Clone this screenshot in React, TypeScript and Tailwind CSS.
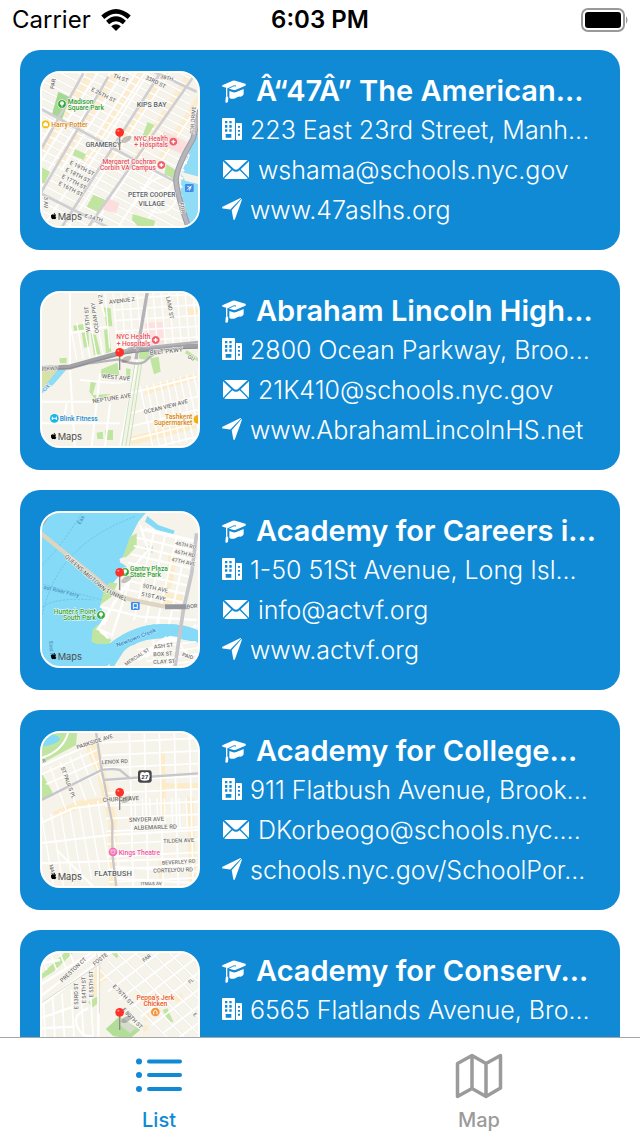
import type { ReactNode } from 'react';
import { FaApple } from 'react-icons/fa';

type Row = { kind: 'school' | 'building' | 'mail' | 'link'; text: string };
type School = { rows: Row[]; map: ReactNode; place: string };

/* A family of parallel strokes: n lines of vector (dx, dy), each shifted by (sx, sy). */
function hatch(x: number, y: number, sx: number, sy: number, dx: number, dy: number, n: number) {
  return Array.from({ length: n }, (_, i) => `M${x + sx * i} ${y + sy * i}l${dx} ${dy}`).join('');
}

function Label({ x, y, children, size = 17, rot = 0, fill = '#737373', anchor = 'start', weight = 500, halo = '#fffdf8' }: {
  x: number; y: number; children: string; size?: number; rot?: number; fill?: string;
  anchor?: 'start' | 'middle' | 'end'; weight?: number; halo?: string;
}) {
  return (
    <text x={x} y={y} fontSize={size} fontWeight={weight} fill={fill} textAnchor={anchor}
      stroke={halo} strokeWidth="3" paintOrder="stroke" transform={`rotate(${rot} ${x} ${y})`}>
      {children}
    </text>
  );
}

function Pin() {
  return (
    <g>
      <ellipse cx="289" cy="238" rx="17" ry="8" fill="#555" opacity=".35" transform="rotate(-30 289 238)" />
      <path d="M269 225V270" stroke="#8b8b8b" strokeWidth="4" />
      <circle cx="269" cy="217" r="13" fill="#ff3028" />
      <circle cx="265" cy="212" r="3" fill="#ff9d96" />
    </g>
  );
}

function Cross({ x, y }: { x: number; y: number }) {
  return (
    <g>
      <circle cx={x} cy={y} r="13" fill="#ef5f6c" stroke="#fff" strokeWidth="2" />
      <path d={`M${x - 6} ${y}h12M${x} ${y - 6}v12`} stroke="#fff" strokeWidth="4" />
    </g>
  );
}

function Tree({ x, y }: { x: number; y: number }) {
  return (
    <g>
      <circle cx={x} cy={y} r="13" fill="#35a935" stroke="#fff" strokeWidth="2" />
      <circle cx={x} cy={y - 2} r="6" fill="#fff" />
      <path d={`M${x} ${y}v8`} stroke="#fff" strokeWidth="3" />
    </g>
  );
}

function Thumb({ top = 33, label, children }: { top?: number; label: string; children: ReactNode }) {
  return (
    <div className="h-[157px] w-40 shrink-0 overflow-hidden rounded-[20px] border-2 border-white bg-[#f6f3ea]">
      <svg role="img" aria-label={label} viewBox={`36 ${top + 6} 468 459`} className="block h-full w-full font-['Roboto',sans-serif]" fill="none">
        {children}
        <g fill="#4c4c4c">
          <FaApple x={60} y={top + 424} size={22} />
          <text x="83" y={top + 446} fontSize="28" fontFamily="Inter, sans-serif">Maps</text>
        </g>
      </svg>
    </div>
  );
}

const mapGramercy = (
  <Thumb label="Map of Gramercy">
    <path d={hatch(10, 310, 75, 0, 230, -360, 7)} stroke="#fdedcf" strokeWidth="22" />
    <path d="M330 520L420 360L500 300V520Z" fill="#f6f3ea" />
    <path d="M497 220L455 340L452 400L478 510H510V220Z" fill="#8fdcf6" />
    <path d="M452 335L505 350V372L465 362Z" fill="#f6f3ea" />
    <path d={hatch(20, -180, 0, 26, 460, 235, 28)} stroke="#e9e6df" strokeWidth="7" />
    <path d={hatch(20, -180, 0, 26, 460, 235, 28)} stroke="#fff" strokeWidth="5" />
    <path d={hatch(-20, 330, 38, 0, 210, -330, 6)} stroke="#fff" strokeWidth="5" />
    <path d={hatch(20, 530, 75, 0, 330, -500, 5)} stroke="#fff" strokeWidth="5" />
    <path d="M497 235L462 335L455 400L478 510H510V220Z" fill="#8fdcf6" />
    <path d="M452 335L505 350V372L465 362Z" fill="#f6f3ea" />
    <path d="M85 95L120 112L96 178L66 163Z" fill="#a5d893" />
    <path d="M353 186L373 195L350 232L338 226ZM135 267L168 283L160 300L128 285ZM190 404L227 420L208 458L170 440ZM408 312L437 330L430 362L403 345ZM308 462L375 482L372 500H325L306 480ZM30 318L60 335L44 370L30 368Z" fill="#bfe5a0" />
    <path d="M400 212L470 245L460 285L395 255Z M230 412L268 430L258 460L220 450Z" fill="#fbdedd" />
    <path d="M310 440Q350 360 395 350T440 420Q410 475 360 450M330 380Q370 410 420 380" stroke="#fff" strokeWidth="5" />
    <path d="M20 420L235 50M90 510L390 40M165 515L490 50M30 145L440 368M32 400L250 510M360 30L500 95M35 265L160 40" stroke="#cfcfd3" strokeWidth="8" />
    <path d="M510 150L490 235Q440 320 438 360Q440 400 478 510" stroke="#9c9ca4" strokeWidth="17" />
    <path d="M510 150L490 235Q440 320 438 360Q440 400 478 510" stroke="#b6b6bc" strokeWidth="11" />
    <Label x={182} y={92} rot={27} size={17}>E 26TH ST</Label>
    <Label x={345} y={56} rot={27} size={17}>33RD ST</Label>
    <Label x={248} y={52} rot={20} size={17}>TH ST</Label>
    <Label x={390} y={54} rot={14} size={16}>38TH</Label>
    <Label x={72} y={88} rot={-80} size={17}>PAR</Label>
    <Label x={118} y={312} rot={27} size={17}>E 19TH ST</Label>
    <Label x={105} y={333} rot={27} size={17}>E 18TH ST</Label>
    <Label x={94} y={353} rot={27} size={17}>E 17TH ST</Label>
    <Label x={84} y={374} rot={27} size={17}>E 16TH ST</Label>
    <Label x={163} y={472} rot={16} size={17}>E 14TH</Label>
    <Label x={41} y={410} rot={90} size={17}>3 AV</Label>
    <Label x={492} y={222} rot={-86} size={17}>FDR DRIVE</Label>
    <Label x={448} y={430} rot={78} size={17}>FDR</Label>
    <Label x={320} y={140} size={21} fill="#55606b">KIPS BAY</Label>
    <Label x={167} y={261} size={20} fill="#55606b">GRAMERCY</Label>
    <Label x={365} y={412} size={20} anchor="middle" fill="#55606b">PETER COOPER</Label>
    <Label x={365} y={437} size={20} anchor="middle" fill="#55606b">VILLAGE</Label>
    <Label x={113} y={131} size={20} fill="#2f9e35">Madison</Label>
    <Label x={113} y={150} size={20} fill="#2f9e35">Square Park</Label>
    <Label x={64} y={200} size={20} fill="#d98512">Harry Potter</Label>
    <Label x={414} y={242} size={20} anchor="end" fill="#e8505f">NYC Health</Label>
    <Label x={414} y={261} size={20} anchor="end" fill="#e8505f">+ Hospitals</Label>
    <Label x={378} y={312} size={20} anchor="end" fill="#e8505f">Margaret Cochran</Label>
    <Label x={378} y={331} size={20} anchor="end" fill="#e8505f">Corbin VA Campus</Label>
    <Tree x={96} y={132} />
    <circle cx="47" cy="193" r="13" fill="#f8b90c" stroke="#fff" strokeWidth="2" />
    <path d="M40 190h14v9h-14zM44 190v-4h6v4" fill="#fff" />
    <Cross x={430} y={245} />
    <Cross x={394} y={315} />
    <rect x="465" y="372" width="26" height="24" rx="4" fill="#3b8bea" />
    <path d="M471 391L485 377M472 379L484 384M478 392L482 380" stroke="#fff" strokeWidth="3" />
    <Pin />
  </Thumb>
);

const mapConey = (
  <Thumb label="Map of Coney Island">
    <path d="M30 272L108 266L30 335Z" fill="#d8e2a8" />
    <path d="M30 335L85 268H110L72 312L30 345Z" fill="#8fdcf6" />
    <path d="M130 137L172 130V148L132 153ZM155 158L175 155L178 200L162 203ZM182 160L198 165L212 222L192 226ZM220 82L242 85L247 138L230 140ZM222 150L236 146L244 215L228 220ZM88 235L110 233V250H90ZM214 268L262 248L268 285L212 290ZM288 265L302 267L300 290L289 292ZM182 305L198 308L188 345L240 342L242 358H195L178 335ZM360 235L386 230L392 275L372 283ZM330 210L370 205L350 240L320 235ZM200 458L218 455L220 477H202ZM225 450H249V480H225ZM470 210L505 235V245L465 220Z" fill="#bfe5a0" />
    <path d="M345 130L400 125L405 190L342 198Z" fill="#fce1df" />
    <path d="M340 325L500 280V298L345 345ZM300 470L500 420V445L305 495ZM470 85H505V105H475ZM230 345L300 340V355L235 358Z" fill="#fdecc9" />
    <path d={hatch(245, 58, 4, 32, 290, -18, 5)} stroke="#fff" strokeWidth="5" />
    <path d={hatch(225, 35, 24, 0, 14, 170, 12)} stroke="#fff" strokeWidth="4" />
    <path d={hatch(300, 400, 0, 40, 220, -55, 4)} stroke="#fff" strokeWidth="5" />
    <path d={hatch(330, 320, 20, -5, 40, 190, 9)} stroke="#fff" strokeWidth="4" />
    <path d={hatch(120, 130, 20, -3, 20, 110, 5)} stroke="#fff" strokeWidth="4" />
    <path d="M120 35V265M30 365H190L320 335L500 290M120 270L135 510M210 280L185 500M270 500L325 220L350 40M110 370L100 430M30 430H270M150 300L260 310L310 300M240 370L225 500M118 160L230 140M205 40L225 110" stroke="#fff" strokeWidth="6" />
    <path d="M275 500L315 250M287 500L326 250M298 500L335 250" stroke="#c5e3b6" strokeWidth="3" />
    <path d="M30 266L120 261L250 225Q300 205 505 198" stroke="#a1a1a6" strokeWidth="15" />
    <path d="M180 250L265 238Q330 262 350 240T400 210M270 225Q300 195 345 202L505 186" stroke="#b4b4b8" strokeWidth="7" />
    <path d="M352 35L318 238" stroke="#b4b4b8" strokeWidth="10" />
    <path d="M30 270L120 265L250 229Q300 212 505 204" stroke="#8c8c92" strokeWidth="3" />
    <Label x={238} y={72} rot={-7} size={17}>AVENUE Z</Label>
    <Label x={180} y={155} rot={-94} size={17}>W 5TH ST</Label>
    <Label x={207} y={158} rot={-98} size={17}>OCEAN PKY</Label>
    <Label x={218} y={72} rot={-94} size={17}>W 2</Label>
    <Label x={408} y={50} rot={80} size={17}>LAND ST</Label>
    <Label x={40} y={272} rot={-4} size={16}>PKWY</Label>
    <Label x={360} y={225} rot={-6} size={19}>BELT PKWY</Label>
    <Label x={215} y={294} rot={6} size={18}>WEST AVE</Label>
    <Label x={188} y={370} rot={-9} size={18}>NEPTUNE AVE</Label>
    <Label x={343} y={402} rot={-14} size={17}>OCEAN VIEW AVE</Label>
    <Label x={44} y={336} rot={-48} size={16} fill="#3c91c9">Crk</Label>
    <Label x={472} y={234} rot={25} size={16}>GU</Label>
    <Label x={361} y={177} size={20} anchor="end" fill="#e8505f">NYC Health</Label>
    <Label x={361} y={197} size={20} anchor="end" fill="#e8505f">+ Hospitals</Label>
    <Label x={89} y={422} size={20} fill="#168bd0">Blink Fitness</Label>
    <Label x={487} y={416} size={20} anchor="end" fill="#d98512">Tashkent</Label>
    <Label x={487} y={435} size={20} anchor="end" fill="#d98512">Supermarket</Label>
    <Cross x={377} y={180} />
    <circle cx="73" cy="415" r="13" fill="#16b6e8" />
    <path d="M65 415h16M67 410v10M79 410v10" stroke="#fff" strokeWidth="3" />
    <circle cx="504" cy="418" r="13" fill="#f4ae13" />
    <Pin />
  </Thumb>
);

const mapQueens = (
  <Thumb label="Map of Long Island City">
    <path d="M30 30H355L325 65L300 115L280 170L270 185L290 200L240 260L212 315L222 350L196 400L240 430L200 510H30Z" fill="#85daf7" />
    <path d="M300 110L320 100V140L295 165L275 185ZM238 248L262 250L245 290L210 315L222 270ZM188 388L205 372L210 400L245 420L235 432H200L184 425Z" fill="#bfe5a0" />
    <path d="M268 178Q275 170 290 172L300 190H272Z" fill="#f6f3ea" />
    <path d="M235 510L250 450Q320 400 380 385T510 395V430Q420 405 350 420T255 510Z" fill="#85daf7" />
    <path d="M245 510L290 440L420 410L505 430V510Z" fill="#f6f3ea" />
    <path d="M240 430Q310 375 390 372T510 395V428Q430 400 370 408T225 505L180 510Z" fill="#85daf7" />
    <path d="M352 48L385 75L434 92L430 103L380 90L345 65Z" fill="#85daf7" />
    <path d="M30 90L65 40H45L30 60Z" fill="#a8a8ad" />
    <path d="M415 160L440 165L430 240L415 280L460 285L455 305L395 315L412 230Z" fill="#fdecc9" />
    <rect x="345" y="138" width="24" height="20" fill="#d8e0d3" />
    <path d="M155 40Q80 160 30 200M315 50Q120 120 60 270T60 500M30 250L215 300M30 330Q60 290 190 300" stroke="#5fb9e4" strokeWidth="2" strokeDasharray="7 4" />
    <path d={hatch(330, 88, -9, 25, 190, 44, 9)} stroke="#fff" strokeWidth="6" />
    <path d={hatch(372, 95, 34, 8, -60, 265, 4)} stroke="#fff" strokeWidth="6" />
    <path d="M330 75L355 150L320 190L285 260L205 385L235 415M345 85L505 125M300 240L245 410M255 300L220 375M210 320L330 350L500 360M200 385L245 405M385 350V390" stroke="#fff" strokeWidth="7" />
    <path d={hatch(280, 500, 22, -9, 130, -90, 6)} stroke="#fff" strokeWidth="5" />
    <path d={hatch(320, 450, 15, 17, 180, -25, 4)} stroke="#fff" strokeWidth="5" />
    <path d="M370 420L375 500M400 415L420 500M445 430L505 500" stroke="#fff" strokeWidth="6" />
    <path d="M240 430Q310 375 390 372T510 395V428Q430 400 370 408T265 470L180 510Z" fill="#85daf7" />
    <path d="M500 100L485 220L460 330L435 500" stroke="#c6c6cb" strokeWidth="11" />
    <path d="M30 98L100 155L205 240Q260 295 330 305L405 320" stroke="#ddd4c2" strokeWidth="13" />
    <path d="M405 320H475" stroke="#96969d" strokeWidth="15" />
    <Label x={103} y={172} rot={41} size={18}>QUEENS MIDTOWN</Label>
    <Label x={226} y={277} rot={24} size={18}>TUNNEL</Label>
    <Label x={435} y={134} rot={12} size={16}>46TH RD</Label>
    <Label x={432} y={159} rot={12} size={16}>46TH RD</Label>
    <Label x={424} y={183} rot={12} size={16}>47TH AVE</Label>
    <Label x={337} y={262} rot={12} size={17}>50TH AVE</Label>
    <Label x={333} y={287} rot={12} size={17}>51ST AVE</Label>
    <Label x={470} y={326} rot={-5} size={17}>BOR</Label>
    <Label x={372} y={446} rot={-6} size={17}>ASH ST</Label>
    <Label x={370} y={469} rot={-3} size={17}>BOX ST</Label>
    <Label x={370} y={492} rot={-3} size={17}>CLAY ST</Label>
    <Label x={288} y={498} rot={-33} size={15}>MERCIAL ST</Label>
    <Label x={455} y={468} rot={18} size={16}>PAID</Label>
    <Label x={40} y={266} rot={14} size={17} fill="#3f94c5" halo="#8fdcf6">ast River Ferry</Label>
    <Label x={150} y={74} rot={-58} size={17} fill="#3f94c5" halo="#8fdcf6">Eas</Label>
    <Label x={57} y={424} rot={85} size={16} fill="#3f94c5" halo="#8fdcf6">East R</Label>
    <Label x={262} y={442} rot={-22} size={18} fill="#3186c4" halo="#b5e8fa">Newtown Creek</Label>
    <Label x={300} y={214} size={20} fill="#2f9e35">Gantry Plaza</Label>
    <Label x={300} y={232} size={20} fill="#2f9e35">State Park</Label>
    <Label x={197} y={342} size={20} anchor="end" fill="#2f9e35">Hunter's Point</Label>
    <Label x={197} y={361} size={20} anchor="end" fill="#2f9e35">South Park</Label>
    <Tree x={285} y={216} />
    <Tree x={213} y={345} />
    <rect x="303" y="306" width="26" height="24" rx="4" fill="#3b8bea" />
    <path d="M310 311h12v12h-12zM309 327l4-4M323 327l-4-4" stroke="#fff" strokeWidth="3" />
    <Pin />
  </Thumb>
);

const mapFlatbush = (
  <Thumb label="Map of Flatbush">
    <path d="M30 30H142L138 75L30 133ZM30 150L72 225L30 243Z" fill="#bfe5a0" />
    <path d="M42 55Q60 35 82 48T60 75T42 55Z" fill="#85daf7" />
    <path d="M30 115Q100 95 115 35" stroke="#fff" strokeWidth="6" />
    <path d="M175 60L205 65L232 180L260 300L262 500H238L235 310L200 160L170 95ZM70 275L150 240L320 225V245L160 262L75 295ZM390 90L405 95L408 300L392 310ZM385 190H505V205H390ZM470 230L490 235L500 500H480ZM385 430L400 420L402 500H388Z" fill="#fdecc9" />
    <path d={hatch(215, 68, 2, 38, 300, -14, 12)} stroke="#fff" strokeWidth="5" />
    <path d={hatch(298, 38, 45, 0, 12, 470, 5)} stroke="#fff" strokeWidth="5" />
    <path d={hatch(315, 235, 22, 0, 3, 90, 8)} stroke="#fff" strokeWidth="4" />
    <path d={hatch(30, 165, 18, 28, 170, -75, 3)} stroke="#fff" strokeWidth="5" />
    <path d={hatch(35, 290, 28, -8, 38, 220, 8)} stroke="#fff" strokeWidth="4" />
    <path d={hatch(60, 140, 30, -14, 48, 130, 5)} stroke="#fff" strokeWidth="4" />
    <path d="M30 140L200 65L240 40M30 370L240 345L505 330M30 310L130 265L320 240M35 430L500 415M250 440L505 455M250 475L505 490M80 390L190 500" stroke="#fff" strokeWidth="6" />
    <path d="M30 242L215 150M198 35L215 150L247 310V400L260 510M213 150Q250 145 270 150L300 175M220 180L505 160" stroke="#c6c6cc" strokeWidth="7" />
    <Label x={142} y={88} rot={-18} size={17}>PARKSIDE AVE</Label>
    <Label x={215} y={133} rot={-3} size={17}>LENOX RD</Label>
    <Label x={92} y={143} rot={70} size={17}>ST PAULS PL</Label>
    <Label x={40} y={129} rot={-18} size={16}>R</Label>
    <Label x={218} y={246} rot={-3} size={18}>CHURCH AVE</Label>
    <Label x={297} y={306} rot={-2} size={18}>SNYDER AVE</Label>
    <Label x={311} y={330} rot={-2} size={18}>ALBEMARLE RD</Label>
    <Label x={400} y={369} rot={-2} size={17}>TILDEN AVE</Label>
    <Label x={396} y={434} rot={-3} size={16}>BEVERLEY RD</Label>
    <Label x={370} y={458} rot={-2} size={17}>CORTELYOU RD</Label>
    <Label x={332} y={496} rot={-1} size={14}>ITMAS AV</Label>
    <Label x={58} y={434} rot={80} size={16}>MAR</Label>
    <Label x={193} y={469} size={23} fill="#55606b">FLATBUSH</Label>
    <Label x={266} y={404} size={20} fill="#ef56a9">Kings Theatre</Label>
    <circle cx="249" cy="396" r="13" fill="#f56db5" />
    <path d="M243 390h12v8q-6 8-12 0zM246 394h2M251 394h2" stroke="#fff" strokeWidth="2" />
    <rect x="324" y="151" width="41" height="37" rx="7" fill="#45454a" />
    <path d="M332 158q6-4 12 0q6-4 13 0q5 10 0 22q-13 5-25 0q-5-12 0-22z" fill="#fff" />
    <text x="344" y="176" fontSize="18" fontWeight="700" fill="#333" textAnchor="middle">27</text>
    <Pin />
  </Thumb>
);

const mapFlatlands = (
  <Thumb label="Map of Flatlands">
    <g transform="translate(0 -30)">
      <path d="M30 150L70 125L138 60H112L30 138ZM175 215L208 195L210 215L185 235ZM228 297L268 260L330 300L300 325L250 318ZM245 70H272L260 85ZM398 240L412 235L430 275L418 280Z" fill="#bfe5a0" />
      <path d="M195 110L210 105L230 150L215 155L205 200H185ZM340 265L355 245L362 262L345 275ZM430 205L455 190L460 205L440 220ZM335 290L350 285L355 300L342 305Z" fill="#fdecc9" />
      <path d={hatch(204, 114, 30, -22, 270, 270, 11)} stroke="#e6e3dc" strokeWidth="7" />
      <path d={hatch(204, 114, 30, -22, 270, 270, 11)} stroke="#fff" strokeWidth="5" />
      <path d={hatch(200, 160, 33, 25, 270, -205, 9)} stroke="#fff" strokeWidth="5" />
      <path d={hatch(40, 215, 28, -12, 10, 180, 6)} stroke="#fff" strokeWidth="5" />
      <path d={hatch(30, 70, 30, 0, 20, 50, 4)} stroke="#fff" strokeWidth="5" />
      <path d="M30 230L250 60M30 200L200 70M30 165L190 65M205 70V330M30 265L130 230M30 295L135 290M175 235Q130 250 140 285T190 320M30 100L90 90" stroke="#fff" strokeWidth="7" />
      <path d="M25 225L215 98M200 70L208 110V250" stroke="#dedbd5" strokeWidth="3" />
      <path d="M228 297L268 260L330 300L300 325L250 318Z" fill="#b3de97" />
      <path d="M275 262L318 295L300 310L270 285Z" fill="#d5dccb" />
      <Label x={97} y={158} rot={-43} size={17}>PRESTON CT</Label>
      <Label x={194} y={108} rot={-38} size={17}>FOSTE</Label>
      <Label x={145} y={238} rot={-91} size={17}>E 53RD ST</Label>
      <Label x={168} y={220} rot={-91} size={17}>E 54TH ST</Label>
      <Label x={190} y={202} rot={-91} size={17}>E 55TH ST</Label>
      <Label x={247} y={170} rot={46} size={17}>E 76TH ST</Label>
      <Label x={275} y={240} rot={46} size={17}>E 80TH ST</Label>
      <Label x={342} y={97} rot={-38} size={16}>FAR</Label>
      <Label x={480} y={162} rot={-42} size={15}>FL</Label>
      <Label x={488} y={254} rot={45} size={15}>E</Label>
      <Label x={376} y={210} size={20} anchor="middle" fill="#e95822">Peppa's Jerk</Label>
      <Label x={376} y={229} size={20} anchor="middle" fill="#e95822">Chicken</Label>
      <circle cx="376" cy="246" r="13" fill="#f5943a" />
      <path d="M371 253v-9q5-7 10 0v9" stroke="#fff" strokeWidth="3" />
      <g transform="translate(0 30)"><Pin /></g>
    </g>
  </Thumb>
);

function Cap() {
  return (
    <svg viewBox="36 61 72 69" className="h-[23px] w-6 shrink-0" fill="#fff" aria-hidden="true">
      <path d="M37 77L68 63Q72 62 76 63L106 72Q109 75 106 78L78 90Q73 92 68 90L38 81Q35 79 37 77Z" />
      <path d="M78 79Q72 77 68 80L54 87V98" fill="none" stroke="#118ad5" strokeWidth="3" />
      <path d="M50 84V108" stroke="#fff" strokeWidth="4" />
      <path d="M50 105L55 115L54 127Q50 131 46 128L47 114Z" />
      <path d="M58 94L69 98Q74 99 79 97L101 88V104Q99 109 92 111Q84 110 76 116Q64 120 58 114Z" />
    </svg>
  );
}

function Building() {
  return (
    <svg viewBox="36 174 60 66" className="mb-0.5 h-[22px] w-5 shrink-0" aria-hidden="true">
      <path fill="#fff" fillRule="evenodd" d="M39 174H72Q75 174 75 177V240H39Q36 240 36 237V177Q36 174 39 174ZM45 183V190H52V183ZM58 183V190H65V183ZM45 195V203H52V195ZM58 195V203H65V195ZM45 208V215H52V208ZM58 208V215H65V208ZM47 222V233H64V222ZM78 189H93Q96 189 96 192V237Q96 240 93 240H78ZM84 198V203H90V198ZM84 210V215H90V210ZM84 221V227H90V221Z" />
    </svg>
  );
}

function Envelope() {
  return (
    <svg viewBox="36 300 84 57" className="mb-0.5 h-[19px] w-7 shrink-0" fill="#fff" aria-hidden="true">
      <path d="M43 300H113L84 327Q78 332 72 327ZM39 304L64 328L39 353ZM117 304V353L92 328ZM67 331Q78 340 89 331L113 355Q112 357 109 357H47Q44 357 43 355Z" />
    </svg>
  );
}

function Arrow() {
  return (
    <svg viewBox="36 413 60 67" className="mb-0.5 h-[22px] w-5 shrink-0" fill="#fff" aria-hidden="true">
      <path d="M37 440L92 413Q95 413 93 415L61 448L38 445Q34 443 37 440ZM95 416Q97 416 96 419L75 478Q72 482 70 478L65 450Z" />
    </svg>
  );
}

const icons = { school: <Cap />, building: <Building />, mail: <Envelope />, link: <Arrow /> };

const schools: School[] = [
  {
    place: 'gramercy', map: mapGramercy, rows: [
      { kind: 'school', text: 'Â“47Â” The American...' },
      { kind: 'building', text: '223 East 23rd Street, Manh...' },
      { kind: 'mail', text: 'wshama@schools.nyc.gov' },
      { kind: 'link', text: 'www.47aslhs.org' },
    ],
  },
  {
    place: 'coney', map: mapConey, rows: [
      { kind: 'school', text: 'Abraham Lincoln High...' },
      { kind: 'building', text: '2800 Ocean Parkway, Broo...' },
      { kind: 'mail', text: '21K410@schools.nyc.gov' },
      { kind: 'link', text: 'www.AbrahamLincolnHS.net' },
    ],
  },
  {
    place: 'queens', map: mapQueens, rows: [
      { kind: 'school', text: 'Academy for Careers i...' },
      { kind: 'building', text: '1-50 51St Avenue, Long Isl...' },
      { kind: 'mail', text: 'info@actvf.org' },
      { kind: 'link', text: 'www.actvf.org' },
    ],
  },
  {
    place: 'flatbush', map: mapFlatbush, rows: [
      { kind: 'school', text: 'Academy for College...' },
      { kind: 'building', text: '911 Flatbush Avenue, Brook...' },
      { kind: 'mail', text: 'DKorbeogo@schools.nyc....' },
      { kind: 'link', text: 'schools.nyc.gov/SchoolPor...' },
    ],
  },
  {
    place: 'flatlands', map: mapFlatlands, rows: [
      { kind: 'school', text: 'Academy for Conserv...' },
      { kind: 'building', text: '6565 Flatlands Avenue, Bro...' },
    ],
  },
];

function SchoolCard({ school }: { school: School }) {
  return (
    <li className="flex min-h-[200px] shrink-0 gap-5 rounded-[20px] bg-[#118ad5] p-5">
      <div className="pt-px">{school.map}</div>
      <div className="min-w-0 flex-1 text-white">
        {school.rows.map((row) =>
          row.kind === 'school' ? (
            <h2 key={row.kind} className="flex h-10 items-center gap-2.5 pt-0.5 pl-0.5 text-[29px] font-semibold whitespace-nowrap">
              {icons[row.kind]}{row.text}
            </h2>
          ) : (
            <p key={row.kind} className="flex h-10 items-center gap-2 pl-0.5 text-[25px] font-light whitespace-nowrap">
              {icons[row.kind]}<span className="pt-0.5">{row.text}</span>
            </p>
          ),
        )}
      </div>
    </li>
  );
}

export default function App() {
  return (
    <div className="flex h-screen flex-col bg-white font-['Inter',sans-serif] text-black">
      <header className="grid h-10 shrink-0 grid-cols-3 items-center px-3 text-2xl">
        <div className="flex items-center gap-2.5">
          Carrier
          <svg viewBox="0 0 30 22" className="h-[22px] w-[30px]" fill="none" stroke="#000" strokeWidth="4.6" aria-hidden="true">
            <path d="M1.8 8.3Q15-3.5 28.2 8.3" />
            <path d="M6.6 13.5Q15 6 23.4 13.5" />
            <path d="M15 22L10.2 17.2Q15 13.2 19.8 17.2Z" fill="#000" stroke="none" />
          </svg>
        </div>
        <div className="text-center font-semibold">6:03 PM</div>
        <svg viewBox="0 0 48 24" className="h-6 w-12 justify-self-end" aria-hidden="true">
          <rect x="2" y="1" width="42" height="22" rx="6" fill="none" stroke="#999" strokeWidth="2" />
          <rect x="5" y="4" width="36" height="16" rx="3" fill="#000" />
          <path d="M46 8q3 4 0 8z" fill="#999" />
        </svg>
      </header>
      <main className="min-h-0 flex-1 overflow-y-auto px-5 pt-2.5 [scrollbar-width:none]">
        <ul className="flex flex-col gap-5">
          {schools.map((s) => <SchoolCard key={s.place} school={s} />)}
        </ul>
      </main>
      <nav className="grid h-[99px] shrink-0 grid-cols-2 border-t border-[#a6a6a6] text-xl font-medium">
        <button type="button" className="flex flex-col items-center gap-2 pt-3.5 pr-0.5 text-[#118ad5]">
          <svg viewBox="0 0 48 48" className="h-12 w-12" fill="currentColor" stroke="currentColor" aria-hidden="true">
            <g stroke="none"><circle cx="4" cy="9.5" r="3" /><circle cx="4" cy="23" r="3" /><circle cx="4" cy="37" r="3" /></g>
            <path d="M14 9.5H45M14 23H45M14 37H45" strokeWidth="4" strokeLinecap="round" />
          </svg>
          <span className="leading-6">List</span>
        </button>
        <button type="button" className="flex flex-col items-center gap-2 pt-3.5 pr-0.5 text-[#9b9b9b]">
          <svg viewBox="0 0 48 48" className="h-12 w-12" fill="none" stroke="currentColor" strokeWidth="3.5" strokeLinejoin="round" aria-hidden="true">
            <path d="M2.5 11.5L17 3.5L31 11.5L45.5 3.5V36L31 44.5L17 36.5L2.5 44.5ZM17 3.5V36.5M31 11.5V44.5" />
          </svg>
          <span className="leading-6">Map</span>
        </button>
      </nav>
    </div>
  );
}
